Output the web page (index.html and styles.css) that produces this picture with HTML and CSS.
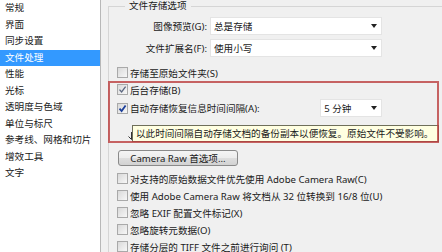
FILE: index.html
```html
<!DOCTYPE html>
<html lang="zh-CN">
<head>
  <meta charset="UTF-8">
  <title>首选项 - 文件处理</title>
  <link rel="stylesheet" href="styles.css">
</head>
<body>

<div class="prefs">
  <ul class="sidebar">
    <li>常规</li>
    <li>界面</li>
    <li>同步设置</li>
    <li class="selected">文件处理</li>
    <li>性能</li>
    <li>光标</li>
    <li>透明度与色域</li>
    <li>单位与标尺</li>
    <li>参考线、网格和切片</li>
    <li>增效工具</li>
    <li>文字</li>
  </ul>

  <div class="main">
    <fieldset class="group">
      <legend>文件存储选项</legend>

      <div class="field">
        <label class="field-label">图像预览(G):</label>
        <div class="select">总是存储<span class="arrow"></span></div>
      </div>
      <div class="field">
        <label class="field-label">文件扩展名(F):</label>
        <div class="select">使用小写<span class="arrow"></span></div>
      </div>

      <div class="check-row first">
        <span class="check"></span>存储至原始文件夹(S)
      </div>
      <div class="check-row">
        <span class="check">
          <svg viewBox="0 0 9 9" width="9" height="9"><path d="M1.5 4.6 L3.6 6.9 L7.6 1.6" fill="none" stroke="#5b6780" stroke-width="1.3"/></svg>
        </span>后台存储(B)
      </div>
      <div class="check-row auto-row">
        <span class="check">
          <svg viewBox="0 0 9 9" width="9" height="9"><path d="M1.5 4.6 L3.6 7 L7.6 1.4" fill="none" stroke="#1c3f9a" stroke-width="1.8"/></svg>
        </span>自动存储恢复信息时间间隔(A):
        <div class="select select-small">5 分钟<span class="arrow"></span></div>
      </div>

      <div class="compat">
        <button class="btn">Camera Raw 首选项...</button>
        <div class="check-row"><span class="check"></span>对支持的原始数据文件优先使用 Adobe Camera Raw(C)</div>
        <div class="check-row"><span class="check"></span>使用 Adobe Camera Raw 将文档从 32 位转换到 16/8 位(U)</div>
        <div class="check-row"><span class="check"></span>忽略 EXIF 配置文件标记(X)</div>
        <div class="check-row"><span class="check"></span>忽略旋转元数据(O)</div>
        <div class="check-row"><span class="check"></span>存储分层的 TIFF 文件之前进行询问 (T)</div>
      </div>
    </fieldset>

    <div class="tooltip">
      <svg class="tooltip-tail" viewBox="0 0 6 10" width="6" height="10"><path d="M4.5 1 V8.5 L1.5 5.5" fill="none" stroke="#333" stroke-width="1"/></svg>
      以此时间间隔自动存储文档的备份副本以便恢复。原始文件不受影响。
    </div>
    <div class="highlight"></div>
  </div>
</div>

</body>
</html>
```

FILE: styles.css
```css
body {
  margin: 0;
  font-family: "Noto Sans", "Noto Sans CJK SC", sans-serif;
  font-size: 9.6px;
  color: #1a1a1a;
  background-color: #f0f0f0;
}

.prefs {
  display: flex;
  height: 252px;
  overflow: hidden;
}

/* left category list */
.sidebar {
  width: 100px;
  flex-shrink: 0;
  margin: 0;
  padding: 0;
  list-style: none;
  background-color: #fff;
  border-right: 1px solid #b8b8b8;
}

.sidebar li {
  height: 16.5px;
  line-height: 16.5px;
  padding-left: 5px;
  white-space: nowrap;
}

.sidebar li.selected {
  background-color: #3399ff;
  color: #fff;
}

/* right panel */
.main {
  position: relative;
  flex: 1;
}

.group {
  min-width: 0;
  margin: 0 3px 0 7px;
  padding: 5px 83px 0 8px;
  border: 1px solid #d5d5d5;
  border-bottom: none;
}

.group legend {
  margin-left: 8px;
  padding: 0 4px;
  line-height: 12px;
}

.field {
  display: flex;
  align-items: center;
  height: 18px;
}

.field + .field {
  margin-top: 4px;
}

.field-label {
  width: 90px;
  margin-right: 3px;
  text-align: right;
  white-space: nowrap;
}

.select {
  flex: 1;
  display: flex;
  align-items: center;
  height: 18px;
  box-sizing: border-box;
  padding-left: 3px;
  background-color: #fff;
  border: 1px solid #e4e4e4;
}

.arrow {
  margin-left: auto;
  margin-right: 4px;
  border-left: 3px solid transparent;
  border-right: 3px solid transparent;
  border-top: 4px solid #222;
}

.check-row {
  display: flex;
  align-items: center;
  height: 17px;
  white-space: nowrap;
}

.check-row.first {
  margin-top: 7px;
}

.auto-row {
  height: 18px;
  margin-top: 1px;
}

.select-small {
  flex: 0 0 62px;
  margin-left: auto;
}

.check {
  display: flex;
  align-items: center;
  justify-content: center;
  flex-shrink: 0;
  width: 11px;
  height: 11px;
  box-sizing: border-box;
  margin-right: 2px;
  border: 1px solid #a9a9a9;
  background: linear-gradient(135deg, #d9d9d9, #f7f7f7);
}

.compat {
  margin-top: 33px;
}

.btn {
  display: block;
  width: 120px;
  height: 16px;
  margin: 0 0 4px 1px;
  padding: 0;
  font: inherit;
  color: #1a1a1a;
  border: 1px solid #8a8a8a;
  border-radius: 3px;
  background: linear-gradient(#f4f4f4, #ececec 50%, #dedede 50%, #d2d2d2);
}

/* hover tip and annotation frame drawn over the panel */
.tooltip {
  position: absolute;
  left: 31px;
  top: 125px;
  width: 307px;
  height: 17px;
  box-sizing: border-box;
  padding-left: 3px;
  line-height: 15px;
  white-space: nowrap;
  background-color: #ffffe1;
  border: 1px solid #6f6f5a;
}

.tooltip-tail {
  position: absolute;
  left: -6px;
  bottom: 0;
}

.highlight {
  position: absolute;
  left: 7px;
  top: 81px;
  width: 331px;
  height: 62px;
  box-sizing: border-box;
  border: 2px solid rgba(188, 62, 62, 0.8);
}
```
